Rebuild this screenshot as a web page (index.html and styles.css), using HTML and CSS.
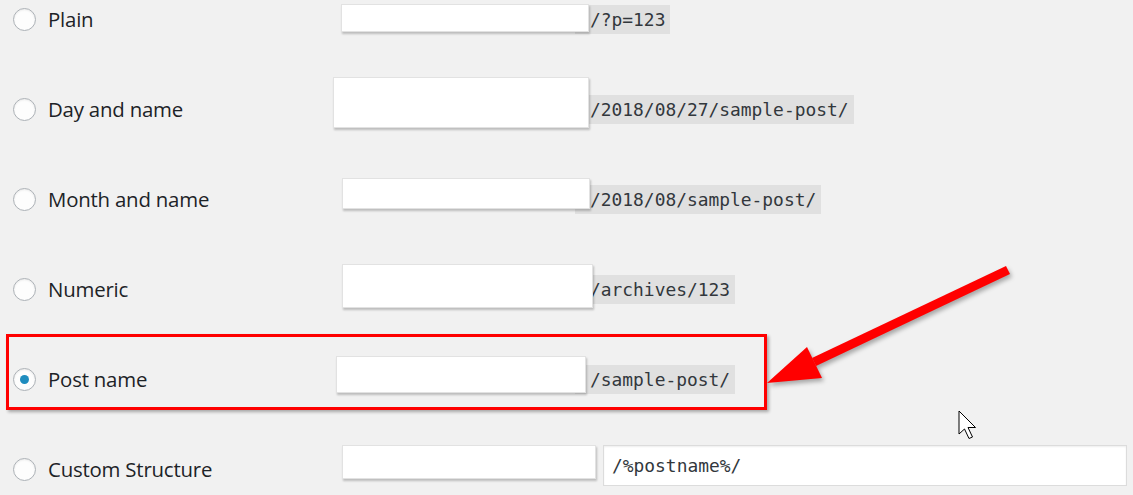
FILE: index.html
```html
<!DOCTYPE html>
<html lang="en">
<head>
    <meta charset="UTF-8">
    <meta name="viewport" content="width=device-width, initial-scale=1.0">
    <title>Permalink Settings</title>
    <link rel="stylesheet" href="styles.css">
</head>
<body>
    <div class="options">
        <div class="row">
            <label class="choice"><span class="radio"></span>Plain</label>
            <div class="value">
                <span class="mask mask-plain"></span>
                <code>/?p=123</code>
            </div>
        </div>
        <div class="row">
            <label class="choice"><span class="radio"></span>Day and name</label>
            <div class="value">
                <span class="mask mask-day"></span>
                <code>/2018/08/27/sample-post/</code>
            </div>
        </div>
        <div class="row">
            <label class="choice"><span class="radio"></span>Month and name</label>
            <div class="value">
                <span class="mask mask-month"></span>
                <code>/2018/08/sample-post/</code>
            </div>
        </div>
        <div class="row">
            <label class="choice"><span class="radio"></span>Numeric</label>
            <div class="value">
                <span class="mask mask-numeric"></span>
                <code>/archives/123</code>
            </div>
        </div>
        <div class="row row-selected">
            <div class="highlight"></div>
            <label class="choice"><span class="radio checked"></span>Post name</label>
            <div class="value">
                <span class="mask mask-post"></span>
                <code>/sample-post/</code>
            </div>
        </div>
        <div class="row">
            <label class="choice"><span class="radio"></span>Custom Structure</label>
            <div class="value">
                <span class="mask mask-custom"></span>
                <input type="text" class="structure" value="/%postname%/">
            </div>
        </div>
    </div>

    <!-- annotation layer: arrow + mouse pointer -->
    <svg class="annotations" width="1133" height="495" viewBox="0 0 1133 495">
        <g class="arrow">
            <polygon points="1006,266 1010,274 816,366 812,358" fill="#ff0000"/>
            <polygon points="767,383 807,347 822,378" fill="#ff0000"/>
        </g>
        <path d="M959 411 L959 434 L964.5 429 L969 438.5 L972.5 437 L968 427.5 L975.5 427.5 Z"
              fill="#fff" stroke="#000" stroke-width="1" stroke-linejoin="round"/>
    </svg>
</body>
</html>
```

FILE: styles.css
```css
body {
    margin: 0;
    background-color: #f1f1f1;
    font-family: "Open Sans", "Noto Sans", sans-serif;
    color: #1d2327;
    overflow: hidden;
    position: relative;
    width: 1133px;
    height: 495px;
}
.options {
    margin-top: -26px;
}
.row {
    position: relative;
    display: flex;
    align-items: center;
    height: 90px;
}
.choice {
    display: flex;
    align-items: center;
    width: 330px;
    flex-shrink: 0;
    font-size: 20.4px;
    font-weight: 500;
    letter-spacing: -0.2px;
}
.radio {
    box-sizing: border-box;
    width: 23px;
    height: 23px;
    margin: 0 12px 0 13px;
    border: 1px solid #acb1b6;
    border-radius: 50%;
    background-color: #fdfdfd;
    box-shadow: inset 0 1px 2px rgba(0, 0, 0, 0.08);
    display: flex;
    align-items: center;
    justify-content: center;
}
.radio.checked::after {
    content: "";
    width: 9px;
    height: 9px;
    border-radius: 50%;
    background-color: #1e8cbe;
}
.value {
    position: relative;
    display: flex;
    align-items: center;
    height: 100%;
    flex: 1;
}
code {
    margin-left: 245px;
    padding: 4px 5px 4px 15px;
    background-color: #e0e0e0;
    font-family: "DejaVu Sans Mono", "Liberation Mono", monospace;
    font-size: 17.9px;
    color: #32373c;
    line-height: 21px;
}
.mask {
    position: absolute;
    z-index: 1;
    box-sizing: border-box;
    background-color: #fff;
    border: 1px solid #e2e2e2;
    box-shadow: 1px 2px 2px rgba(0, 0, 0, 0.22);
}
.mask-plain   { left: 11px; top: 30px; width: 248px; height: 28px; }
.mask-day     { left: 3px;  top: 13px; width: 256px; height: 51px; }
.mask-month   { left: 12px; top: 24px; width: 248px; height: 31px; }
.mask-numeric { left: 12px; top: 20px; width: 251px; height: 44px; }
.mask-post    { left: 6px;  top: 22px; width: 250px; height: 37px; }
.mask-custom  { left: 12px; top: 21px; width: 254px; height: 34px; }
.structure {
    box-sizing: border-box;
    margin-left: 273px;
    margin-top: -8px;
    width: 524px;
    height: 41px;
    padding: 0 8px;
    border: 1px solid #dcdcdc;
    box-shadow: inset 0 1px 2px rgba(0, 0, 0, 0.07);
    background-color: #fff;
    font-family: "DejaVu Sans Mono", "Liberation Mono", monospace;
    font-size: 17.9px;
    color: #32373c;
}
.highlight {
    position: absolute;
    left: 6px;
    top: 0;
    width: 761px;
    height: 76px;
    box-sizing: border-box;
    border: 3px solid #ff0000;
    box-shadow: 2px 2px 3px rgba(0, 0, 0, 0.3);
    pointer-events: none;
}
.annotations {
    position: absolute;
    left: 0;
    top: 0;
    pointer-events: none;
}
.arrow {
    filter: drop-shadow(2px 3px 2px rgba(0, 0, 0, 0.3));
}
```
